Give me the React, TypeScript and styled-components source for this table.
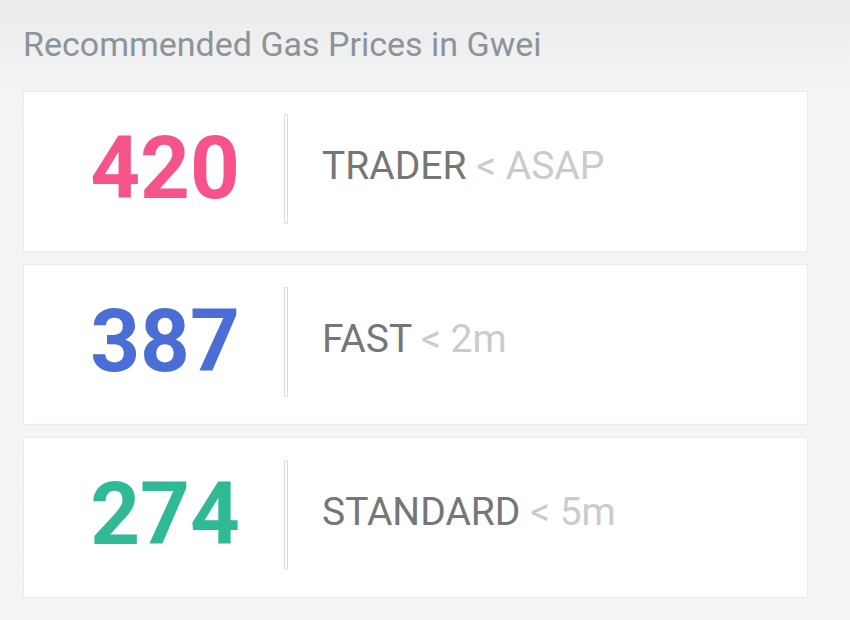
import styled, { createGlobalStyle } from 'styled-components';

const GlobalStyle = createGlobalStyle`
  html, body {
    margin: 0;
    padding: 0;
    background: #f4f5f5;
  }
  body {
    font-family: Roboto, "Liberation Sans", sans-serif;
  }
`;

interface Tier {
  price: number;
  name: string;
  wait: string;
  color: string;
}

const tiers: Tier[] = [
  { price: 420, name: 'TRADER', wait: '< ASAP', color: '#f5538a' },
  { price: 387, name: 'FAST', wait: '< 2m', color: '#4a6dd6' },
  { price: 274, name: 'STANDARD', wait: '< 5m', color: '#2fb994' },
];

const App = () => {
  return (
    <Page>
      <GlobalStyle />
      <Title>Recommended Gas Prices in Gwei</Title>
      <List>
        {tiers.map((t) => (
          <Card key={t.name}>
            <Price color={t.color}>{t.price}</Price>
            <Divider />
            <Label>
              {t.name} <Wait>{t.wait}</Wait>
            </Label>
          </Card>
        ))}
      </List>
    </Page>
  );
};

const Page = styled.div`
  min-height: 620px;
  padding: 24px 42px 0 23px;
  box-sizing: border-box;
  background: linear-gradient(to bottom, #ebebeb 0px, #f3f4f4 90px, #f4f5f5 100%);
`;

const Title = styled.h1`
  margin: 0;
  font-size: 34px;
  font-weight: 400;
  line-height: 40px;
  color: #8c939b;
`;

const List = styled.div`
  display: flex;
  flex-direction: column;
  gap: 12px;
  margin-top: 27px;
`;

const Card = styled.div`
  display: grid;
  grid-template-columns: 260px 4px 1fr;
  align-items: center;
  height: 161px;
  box-sizing: border-box;
  background: #ffffff;
  border: 1px solid #e2efec;
`;

const Price = styled.div<{ color: string }>`
  padding-left: 22px;
  text-align: center;
  font-size: 87px;
  font-weight: 700;
  line-height: 1;
  color: ${(p) => p.color};
  margin-top: -6px;
`;

const Divider = styled.div`
  width: 2px;
  height: 108px;
  border: 1px solid #dcdcdc;
  border-radius: 1px;
  margin-top: -6px;
`;

const Label = styled.div`
  padding-left: 34px;
  font-size: 39px;
  font-weight: 400;
  color: #767676;
  margin-top: -12px;
`;

const Wait = styled.span`
  color: #cbcbcb;
`;

export default App;
